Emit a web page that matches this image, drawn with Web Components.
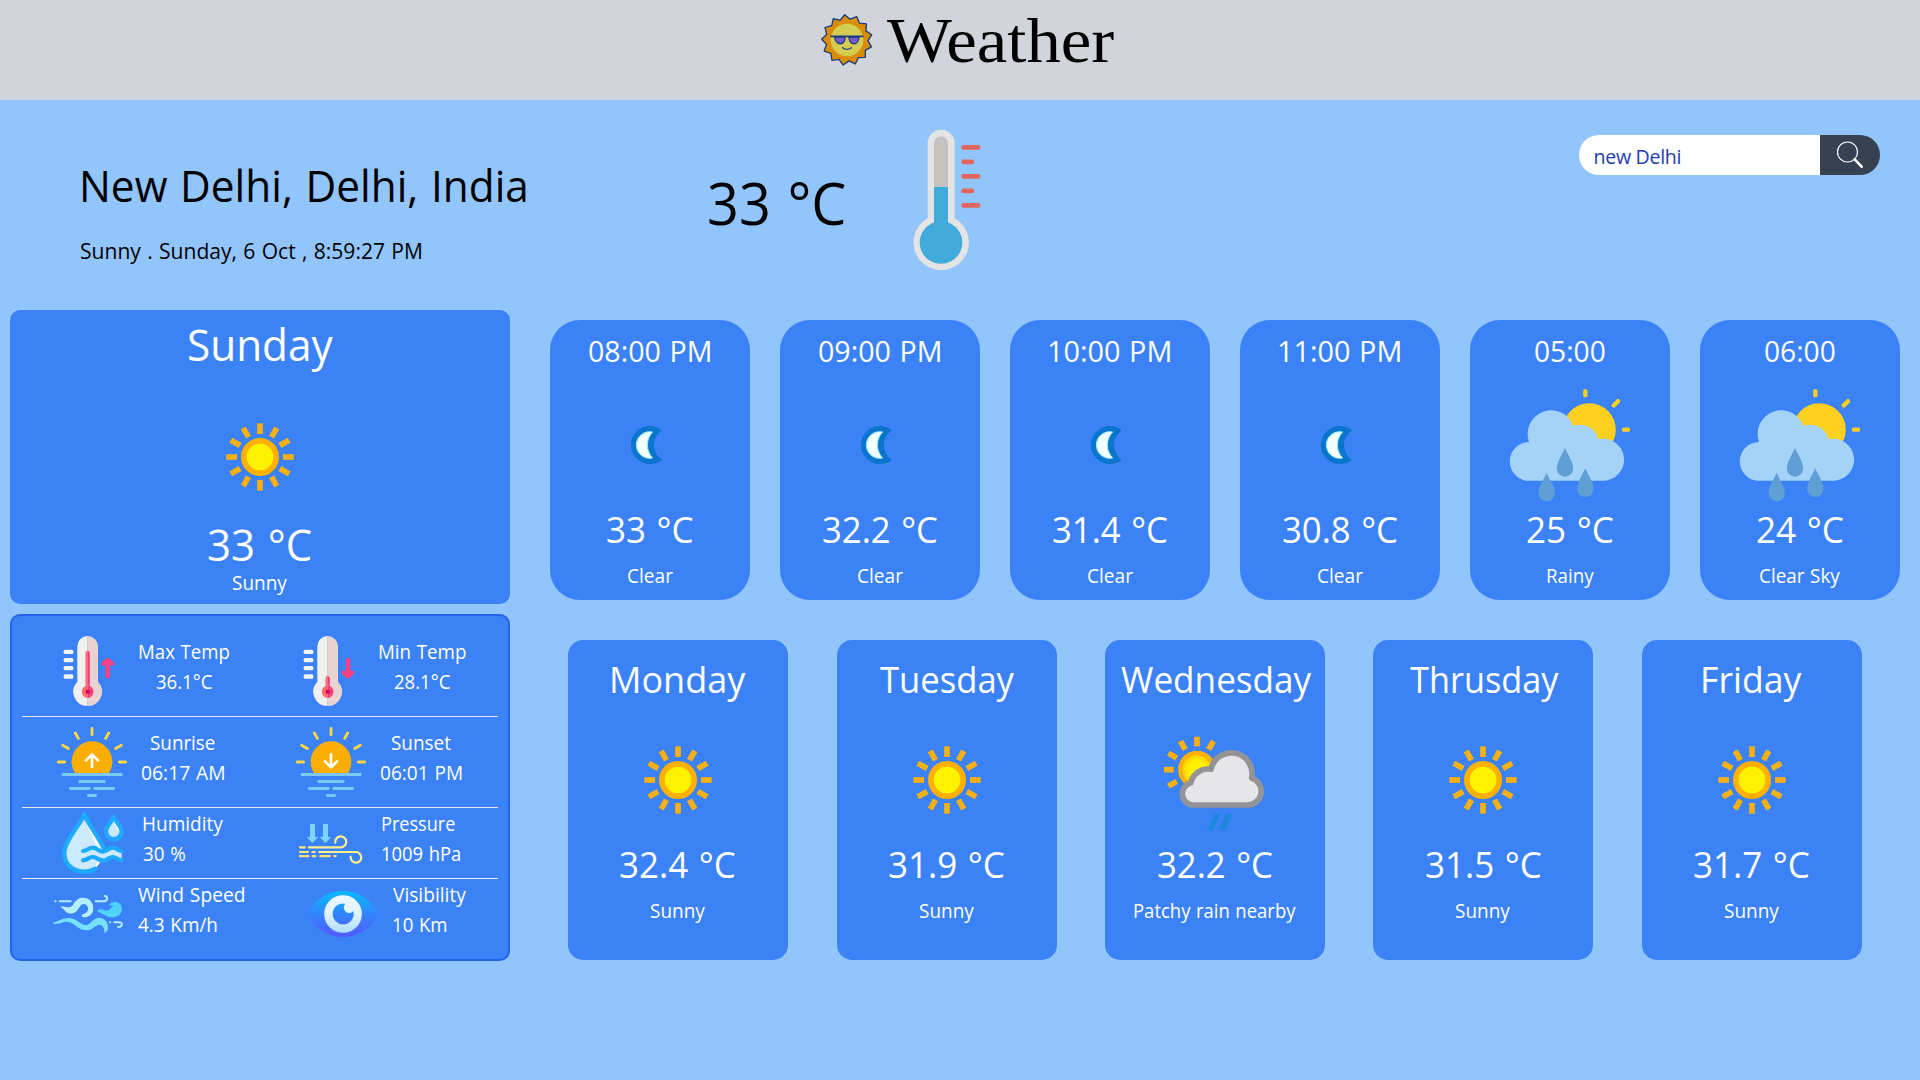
<!DOCTYPE html>
<html lang="en">
<head>
<meta charset="utf-8">
<title>Weather</title>
<style>
  html, body { margin: 0; height: 100%; }
  body { background: #93c5fd; font-family: "Segoe UI", "Open Sans", "Noto Sans", sans-serif; overflow: hidden; }
</style>
</head>
<body>
<weather-app></weather-app>
<script>
const ray = (n, a, b, w, c, cx, cy, from = 0, to = n) => {
  let s = '';
  for (let i = from; i < to; i++) s += `<path d="M${cx} ${cy - a}V${cy - b}" stroke="${c}" stroke-width="${w}" transform="rotate(${i * 360 / n} ${cx} ${cy})"/>`;
  return s;
};
const spikes = (cx, cy, R, r, n, off) => {
  const p = [];
  for (let i = 0; i < n * 2; i++) {
    const a = off + Math.PI * i / n, q = i % 2 ? r : R;
    p.push((cx + q * Math.sin(a)).toFixed(1) + ',' + (cy - q * Math.cos(a)).toFixed(1));
  }
  return p.join(' ');
};
const drop = (x, y) => `<path transform="translate(${x} ${y})" d="M0 0C7 18 24.500 41 24.500 62A24.500 24 0 0 1-24.500 62C-24.500 41-7 18 0 0Z" fill="#5f9fd6"/>`;
const thermo = (x, top, arrow) => `
  <g transform="translate(${x} 0)">
  <path d="M0 78A31 31 0 0 0-31 109V215A43 43 0 0 0 0 288Z" fill="#f0f0ed"/>
  <path d="M0 78A31 31 0 0 1 31 109V215A43 43 0 0 1 0 288Z" fill="#e8d3d1"/>
  <path d="M0 ${top}A6.500 6.500 0 0 0-6.500 ${top + 6}V228A19 19 0 0 0 0 264Z" fill="#ff6b6b"/>
  <path d="M0 ${top}A6.500 6.500 0 0 1 6.500 ${top + 6}V228A19 19 0 0 1 0 264Z" fill="#ff3f7c"/>
  <circle cy="245" r="6.500" fill="#c9095c"/>
  ${[119, 144, 168, 193].map(y => `<rect x="-72" y="${y}" width="29" height="13" rx="4.500" fill="#f0f2f5"/>`).join('')}
  <g fill="none" stroke="#ff4081" stroke-width="13" stroke-linecap="round" stroke-linejoin="round">${arrow}</g></g>`;
const horizon = (x, arrow) => `
  <g transform="translate(${x} 0)" fill="none" stroke-linecap="round">
  <path d="M-50 490A61 61 0 1 1 50 490Z" fill="#fbae02"/>
  <path d="M-101 456H-82M82 456H101M-88 406L-71 415.500M88 406L71 415.500M-50 369L-41 385M50 369L41 385M0 355V374" stroke="#ffd740" stroke-width="8.500"/>
  <path d="M-87 493.500H88M-37 514.500H37M-65 535.500H-8M8 535.500H65M-11 556.500H11" stroke="#7bc9f5" stroke-width="8.500"/>
  <path d="${arrow}" stroke="#fff" stroke-width="8" stroke-linejoin="round"/></g>`;

const ICONS = {
  logo: ['63 42 156 156', 52, 52, `
    <polygon points="${spikes(141, 120, 76, 63, 13, -.09)}" fill="#d98d04" stroke="#1c3a80" stroke-width="4" stroke-linejoin="round"/>
    <circle cx="141" cy="120" r="49" fill="#d5cc52"/>
    <path d="M104 111H135C137 138 106 138 104 111ZM147 111H177C176 138 147 138 147 111Z" fill="#755bce" stroke="#1c3a80" stroke-width="4"/>
    <path d="M93 109H189" stroke="#1c3a80" stroke-width="5" stroke-linecap="round"/>
    <path d="M128 143Q141 153 154 143" fill="none" stroke="#1c3a80" stroke-width="4" stroke-linecap="round"/>`],
  gauge: ['670 60 204 420', 68, 140, `
    <path d="M714 100A40.500 40.500 0 0 1 795 100V325A83 83 0 1 1 714 325Z" fill="#e4e4e4"/>
    <path d="M733 232V100A21 21 0 0 1 775 100V232Z" fill="#c5c1c0"/>
    <path d="M733 231H775V337A64 64 0 1 1 733 337Z" fill="#41abdb"/>
    ${[57, 38, 57, 38, 57].map((w, i) => `<rect x="815" y="${105 + i * 43.5}" width="${w}" height="14" rx="6" fill="#e2665c"/>`).join('')}`],
  search: ['825 60 90 90', 30, 30, `<g fill="none" stroke="#fff" stroke-linecap="round">
    <circle cx="862.500" cy="96" r="30" stroke-width="3.600"/><path d="M884 118L905 140" stroke-width="8"/></g>`],
  sunny: ['600 291 360 360', 120, 120, `${ray(12, 69, 101, 17, '#f9b012', 780, 471)}
    <circle cx="780" cy="471" r="48.500" fill="#fff200" stroke="#ffb000" stroke-width="17"/>`],
  patchy: ['285 270 360 360', 120, 120, `
    <defs><radialGradient id="c"><stop offset=".5" stop-color="#fff200"/><stop offset="1" stop-color="#ffc400"/></radialGradient></defs>
    ${ray(12, 70, 99, 17, '#f9b012', 411, 419, 8, 14)}
    <circle cx="411" cy="419" r="50" fill="url(#c)" stroke="#ffb000" stroke-width="13"/>
    <path d="M402 525A34 34 0 0 1 393 458A52 52 0 0 1 453 418A61 61 0 0 1 575 444A41.500 41.500 0 0 1 562 525Z" fill="#e6e6e9" stroke="#949496" stroke-width="17" stroke-linejoin="round"/>
    <path d="M464 551H481L459 602H441ZM498 551H516L495 602H475Z" fill="#1f87dd"/>`],
  moon: ['150 225 360 360', 120, 120, `
    <path d="M366 361A57 57 0 1 0 366 449A52 52 0 0 1 366 361Z" fill="#0b74cc"/>
    <path d="M338 366A40 40 0 1 0 338 444A56 56 0 0 1 338 366Z" fill="#f2ffff" stroke="#8de9fb" stroke-width="3"/>`],
  rainy: ['150 225 360 360', 120, 120, `
    <circle cx="388" cy="359" r="79.500" fill="#fdd020"/>
    <path d="M376 243.500V255.500M474 273.500L461 286.500M492 359H504" stroke="#fdd020" stroke-width="13" stroke-linecap="round"/>
    <path d="M208 512.500A58 58 0 0 1 207 396A70.500 71 0 0 1 340 348A56 56 0 0 1 415 387A63.500 63.500 0 1 1 430 512.500Z" fill="#a4d3f7"/>
    ${drop(260, 488)}${drop(315, 414)}${drop(376, 475)}`],
  max: ['192 78 150 210', 50, 70, thermo(263, 122, '<path d="M60 199V153M48 161L60 150.500L73 161"/>')],
  min: ['147 78 150 210', 50, 70, thermo(218, 198, '<path d="M61 150V196M48 188L61 199L73 188"/>')],
  sunrise: ['171 351 210 210', 70, 70, horizon(276, 'M0 471V434M-18 451L0 433L18 451')],
  sunset: ['123 351 210 210', 70, 70, horizon(228, 'M0 433V471M-18 454L0 472L18 454')],
  humidity: ['186 36 186 186', 62, 62, `<g stroke-linecap="round" stroke-linejoin="round">
    <path d="M253 44C240 74 194 124 194 158C194 194 220 215 253 215C268 215 280 211 289 204L298 186L306 146C302 124 268 80 253 44Z" fill="#cdeaff"/>
    <path d="M254 54C262 78 292 112 300 143L292 147C284 116 262 88 254 54ZM288 188L302 186L289 202Z" fill="#fff"/>
    <path d="M249 153C262 153 268 145 278 145C292 145 296 156 310 156C322 156 326 147 338 147C350 147 354 155 365 156V180C350 180 348 172 338 172C324 172 322 184 310 184C294 184 290 172 278 172C266 172 260 180 249 181Z" fill="#cdeaff"/>
    <path d="M309 140C300 116 266 76 253 43C240 76 193 122 193 159C193 194 220 215 253 215C266 215 277 212 286 206" fill="none" stroke="#1cabff" stroke-width="13"/>
    <path d="M249 153C262 153 266 143 278 143C292 143 296 155 309 155C322 155 326 143 338 143C350 143 354 153 365 153M249 181C262 181 266 171 278 171C292 171 296 182 309 182C322 182 326 171 338 171C350 171 354 180 365 181" fill="none" stroke="#1cabff" stroke-width="12.500"/>
    <path d="M341 51C336 65 318 78 318 94A23.500 23.500 0 0 0 365 94C365 78 346 65 341 51Z" fill="#cdeaff" stroke="#1cabff" stroke-width="13"/>
    <path d="M342 63C346 74 356 84 357 94C350 84 344 76 342 63Z" fill="#fff"/></g>`],
  pressure: ['132 72 192 120', 64, 40, `
    <path d="M165 72H180V111H190L172.500 129L155 111H165ZM204 72H219V111H229L211.500 129L194 111H204Z" fill="#7dd4fc"/>
    <g fill="none" stroke="#fff08c" stroke-width="6.500" stroke-linecap="round">
    <path d="M162 142H258A16.500 16.500 0 1 0 241 128M193 156H303A16 16 0 1 1 287 170"/>
    <path d="M135 142H149M135 156H159M172 156H179" stroke="#ffe873"/><path d="M135 168.500H160M173 168.500H181M196 168.500H225M238 168.500H242" stroke="#ffe06e"/></g>`],
  wind: ['159 285 210 114', 70, 38, `
    <g fill="none" stroke="#b5ebff" stroke-width="6" stroke-linecap="round">
    <path d="M166 303.500H167M179 303.500H212M287 303.500H312C324 303 324 289 314 288M330 366.500H331M343 366.500H357C370 367 368 381 354 381"/></g>
    <path d="M180 320C194 316 208 328 218 316C226 300 238 292 250 293C270 294 280 308 280 326C280 342 266 353 250 352C243 350 244 344 250 342C262 339 268 330 262 319C256 308 244 311 238 322C230 338 218 343 206 340C198 338 194 327 180 320Z" fill="#b5efff"/>
    <path d="M295 329C304 325 312 333 324 331C334 328 332 319 342 318C330 315 327 318 327 318C329 309 338 305 348 306C360 308 366 317 366 328C365 344 350 353 334 352C316 351 306 338 295 337C292 334 293 331 295 329Z" fill="#4fd5fc"/>
    <path d="M159 369C174 364 188 353 208 354C232 356 238 374 258 375C274 374 276 354 297 353C314 354 324 366 324 382C324 392 320 398 313 399C314 386 308 373 297 374C284 376 279 391 258 391C236 390 226 372 206 366C192 363 176 374 161 372Z" fill="#77e2ff"/>`],
  eye: ['159 273 210 138', 70, 46, `
    <defs><linearGradient id="l" x1="0" y1="0" x2="0" y2="1"><stop stop-color="#06bcff"/><stop offset=".45" stop-color="#2e8aff"/><stop offset="1" stop-color="#5558ff"/></linearGradient>
    <linearGradient id="w" x1="0" y1="0" x2="0" y2="1"><stop stop-color="#eef8ff"/><stop offset=".5" stop-color="#e2f2ff"/><stop offset="1" stop-color="#addcff"/></linearGradient></defs>
    <path d="M159 342C178 302 216 273 264 273C312 273 350 302 369 342C350 382 312 411 264 411C216 411 178 382 159 342Z" fill="url(#l)"/>
    <path fill-rule="evenodd" d="M264 285.500A56.500 56.500 0 1 0 264 398.500A56.500 56.500 0 1 0 264 285.500ZM271 311A14 14 0 0 0 295 334A31.500 31.500 0 1 1 271 311Z" fill="url(#w)"/>`]
};

class Base extends HTMLElement {
  connectedCallback() {
    if (this.shadowRoot) return;
    this.attachShadow({ mode: 'open' }).innerHTML = this.render();
    this.ready?.();
  }
  a(n) { return this.getAttribute(n); }
}

/* A single line of text: s = font size, w = inked width, h = box height, b = baseline offset */
class WxText extends Base {
  render() {
    const s = +this.a('s'), serif = this.hasAttribute('serif');
    const k = serif ? .3375 : .388;
    return `<style>
      :host { display: block; width: ${this.a('w')}px; height: ${this.a('h')}px; white-space: nowrap; font-size: ${s}px; line-height: ${2 * (this.a('b') - k * s) + 2}px; }
      span { display: block; width: max-content; transform-origin: 0 0; ${serif ? 'font-family: "Liberation Serif", serif;' : 'font-family: "Open Sans", "Noto Sans", sans-serif; word-spacing: .04em;'} }
    </style><span><slot></slot></span>`;
  }
  ready() {
    const span = this.shadowRoot.querySelector('span'), s = +this.a('s');
    const c = (WxText.ctx ||= document.createElement('canvas').getContext('2d'));
    c.font = `${s}px ${getComputedStyle(span).fontFamily}`;
    const t = this.textContent, m = c.measureText(t);
    const gaps = this.hasAttribute('serif') ? 0 : (t.split(' ').length - 1) * .04 * s;
    const k = this.a('w') / (m.actualBoundingBoxLeft + m.actualBoundingBoxRight + gaps);
    span.style.transform = `scaleX(${k.toFixed(4)})`;
    span.style.marginLeft = (m.actualBoundingBoxLeft * k).toFixed(2) + 'px';
  }
}
class WxIcon extends Base {
  render() {
    const [vb, w, h, body] = ICONS[this.a('name')];
    return `<style>:host { display: block; flex: none; width: ${w}px; height: ${h}px; } svg { display: block; overflow: visible; }</style>
      <svg width="${w}" height="${h}" viewBox="${vb}">${body}</svg>`;
  }
}
class AppHeader extends Base {
  render() {
    return `<style>
      :host { display: flex; justify-content: center; gap: 14px; height: 100px; background: #d1d5db; color: #000; box-sizing: border-box; padding: 0 0 0 14px; }
      wx-icon { margin-top: 14px; }
    </style>
    <wx-icon name="logo"></wx-icon><wx-text serif s="63.5" w="227" h="100" b="61">Weather</wx-text>`;
  }
}
class SearchBox extends Base {
  render() {
    return `<style>
      :host { display: flex; width: 301px; height: 40px; border-radius: 20px; overflow: hidden; }
      input { flex: 1; min-width: 0; box-sizing: border-box; border: 0; outline: 0; margin: 0; padding: 3px 0 0 14.500px; background: #fff; color: #1e40af; font: 19.600px "Open Sans", "Noto Sans", sans-serif; letter-spacing: -.3px; }
      button { flex: none; width: 60px; border: 0; margin: 0; padding: 0 0 0 15px; background: #374151; }
    </style>
    <input value="new Delhi" aria-label="City"><button aria-label="Search"><wx-icon name="search"></wx-icon></button>`;
  }
}
class CurrentWeather extends Base {
  render() {
    return `<style>
      :host { display: flex; align-items: flex-start; height: 210px; box-sizing: border-box; padding: 0 40px 0 81px; color: #000; }
      .place { width: 628px; padding-top: 50px; flex: none; }
      .place wx-text:first-child { margin-left: 2px; }
      .temp { padding-top: 50px; }
      .g { margin: 30px 0 0 67.500px; }
      search-box { margin: 35px 0 0 auto; }
    </style>
    <div class="place"><wx-text s="44" w="442.7" h="85" b="52">New Delhi, Delhi, India</wx-text>
    <wx-text s="22" w="340.3" h="40" b="23">Sunny . Sunday, 6 Oct , 8:59:27 PM</wx-text></div>
    <wx-text class="temp" s="59" w="136.5" h="100" b="74">33 °C</wx-text>
    <wx-icon class="g" name="gauge"></wx-icon>
    <search-box></search-box>`;
  }
}
const KIND = {
  today: { w: 500, h: 294, r: 10, ts: 44, th: 87, tb: 51, ps: 44, pb: 44, db: 23 },
  hour: { w: 200, h: 280, r: 30, ts: 29.4, th: 65, tb: 42, ps: 36.75, pb: 38, db: 28 },
  day: { w: 220, h: 320, r: 15, ts: 36.75, th: 80, tb: 53, ps: 36.75, pb: 38, db: 28 }
};
class ForecastCard extends Base {
  render() {
    const k = KIND[this.a('kind')], [t, tw] = this.a('head').split('|'), [p, pw] = this.a('temp').split('|'), [d, dw] = this.a('note').split('|');
    return `<style>
      :host { display: flex; flex-direction: column; align-items: center; flex: none; width: ${k.w}px; height: ${k.h}px; border-radius: ${k.r}px; background: #3b82f6; color: #fff; }
      .shift { margin-left: ${this.a('kind') === 'hour' ? -1 : 2}px; }
    </style>
    <wx-text class="shift" s="${k.ts}" w="${tw}" h="${k.th}" b="${k.tb}">${t}</wx-text>
    <wx-icon name="${this.a('icon')}"></wx-icon>
    <wx-text s="${k.ps}" w="${+pw + .8}" h="50" b="${k.pb}">${p}</wx-text>
    <wx-text s="19.6" w="${dw}" h="27" b="${k.db}">${d}</wx-text>`;
  }
}
class DetailItem extends Base {
  render() {
    const [x, y, g, ty] = this.a('at').split(' '), [l, lw] = this.a('label').split('|'), [v, vw] = this.a('value').split('|');
    return `<style>
      :host { display: flex; width: 238px; align-items: flex-start; }
      wx-icon { margin: ${y}px ${g - .7}px 0 ${x}px; }
      div { display: flex; flex-direction: column; align-items: ${this.a('align') || 'center'}; padding-top: ${ty}px; }
    </style>
    <wx-icon name="${this.a('icon')}"></wx-icon>
    <div><wx-text s="19.6" w="${lw}" h="30" b="23">${l}</wx-text><wx-text s="19.6" w="${vw}" h="30" b="23">${v}</wx-text></div>`;
  }
}
class DetailPanel extends Base {
  render() {
    return `<style>
      :host { display: block; box-sizing: border-box; width: 500px; height: 347px; border: 2px solid #2563eb; border-radius: 10px; background: #3b82f6; color: #fff; padding: 0 10px; }
      .row { display: flex; border-bottom: 1px solid #e5e7eb; }
      .row:last-child { border: 0; }
    </style>
    <div class="row" style="height:100px"><detail-item icon="max" at="42 20 25.5 20" label="Max Temp|90" value="36.1°C|56"></detail-item><detail-item icon="min" at="44 20 25.5 20" label="Min Temp|86.5" value="28.1°C|56"></detail-item></div>
    <div class="row" style="height:90px"><detail-item icon="sunrise" at="35 10 15 10" label="Sunrise|63.5" value="06:17 AM|83"></detail-item><detail-item icon="sunset" at="36 10 15 10" label="Sunset|59" value="06:01 PM|81.5"></detail-item></div>
    <div class="row" style="height:70px"><detail-item align="flex-start" icon="humidity" at="40 4 20 0" label="Humidity|80" value="30 %|42.5"></detail-item><detail-item align="flex-start" icon="pressure" at="39 16 19.7 0" label="Pressure|72.5" value="1009 hPa|78.5"></detail-item></div>
    <div class="row" style="height:80px"><detail-item align="flex-start" icon="wind" at="31 16 15.5 0" label="Wind Speed|106.5" value="4.3 Km/h|79"></detail-item><detail-item align="flex-start" icon="eye" at="48 12 15.5 0" label="Visibility|73" value="10 Km|53.5"></detail-item></div>`;
  }
}
class WeatherApp extends Base {
  render() {
    const card = (kind, head, icon, temp, note) => `<forecast-card kind="${kind}" head="${head}" icon="${icon}" temp="${temp}" note="${note}"></forecast-card>`;
    return `<style>
      :host { display: block; width: 1920px; height: 1080px; background: #93c5fd; }
      main { display: flex; gap: 40px; padding-left: 10px; }
      .left { display: flex; flex-direction: column; gap: 10px; }
      .hours { display: flex; gap: 30px; padding-top: 10px; }
      .days { display: flex; gap: 48.400px; padding: 40px 0 0 18.200px; }
    </style>
    <app-header></app-header>
    <current-weather></current-weather>
    <main>
      <div class="left">${card('today', 'Sunday|144.7', 'sunny', '33 °C|102.7', 'Sunny|54')}<detail-panel></detail-panel></div>
      <div>
        <div class="hours">
          ${card('hour', '08:00 PM|121', 'moon', '33 °C|85.7', 'Clear|45')}
          ${card('hour', '09:00 PM|121', 'moon', '32.2 °C|114', 'Clear|45')}
          ${card('hour', '10:00 PM|121', 'moon', '31.4 °C|114', 'Clear|45')}
          ${card('hour', '11:00 PM|121', 'moon', '30.8 °C|114', 'Clear|45')}
          ${card('hour', '05:00|70', 'rainy', '25 °C|86', 'Rainy|47')}
          ${card('hour', '06:00|70', 'rainy', '24 °C|86', 'Clear Sky|80')}
        </div>
        <div class="days">
          ${card('day', 'Monday|134', 'sunny', '32.4 °C|115', 'Sunny|54')}
          ${card('day', 'Tuesday|134.5', 'sunny', '31.9 °C|115', 'Sunny|54')}
          ${card('day', 'Wednesday|190.7', 'patchy', '32.2 °C|114', 'Patchy rain nearby|161.7')}
          ${card('day', 'Thrusday|149', 'sunny', '31.5 °C|115', 'Sunny|54')}
          ${card('day', 'Friday|99', 'sunny', '31.7 °C|115', 'Sunny|54')}
        </div>
      </div>
    </main>`;
  }
}
customElements.define('wx-text', WxText);
customElements.define('wx-icon', WxIcon);
customElements.define('app-header', AppHeader);
customElements.define('search-box', SearchBox);
customElements.define('current-weather', CurrentWeather);
customElements.define('forecast-card', ForecastCard);
customElements.define('detail-item', DetailItem);
customElements.define('detail-panel', DetailPanel);
customElements.define('weather-app', WeatherApp);
</script>
</body>
</html>
